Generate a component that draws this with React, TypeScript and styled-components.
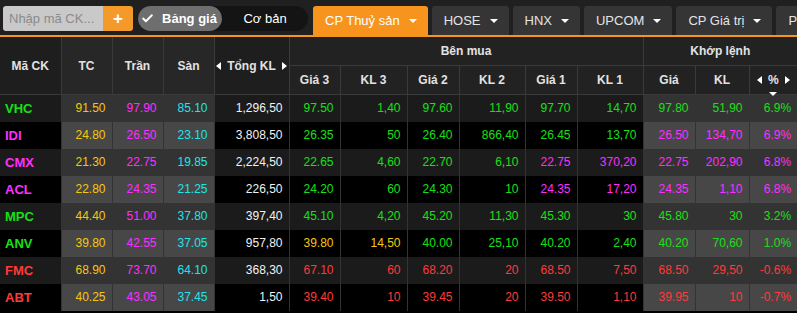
import React from 'react';
import styled, { createGlobalStyle } from 'styled-components';
import { Check } from 'lucide-react';

const ORANGE = '#f7941d';
const YELLOW = '#f5c80f';
const MAGENTA = '#ff2eff';
const CYAN = '#22e3ea';
const GREEN = '#17e017';
const RED = '#ff3a3a';

const GlobalStyle = createGlobalStyle`
  body {
    margin: 0;
    background: #000;
    font-family: "Liberation Sans", Arial, sans-serif;
  }
`;

const Page = styled.div`
  width: 797px;
  height: 313px;
  overflow: hidden;
  background: #000;
`;

const Toolbar = styled.div`
  display: flex;
  align-items: flex-start;
  height: 29px;
  padding: 6px 0 0 3px;
  background: #202020;
  border-bottom: 2px solid ${ORANGE};
  overflow: hidden;
  white-space: nowrap;
`;

const SearchBox = styled.div`
  display: flex;
  height: 25px;
  flex-shrink: 0;
`;

const SearchInput = styled.input`
  width: 100px;
  box-sizing: border-box;
  border: none;
  border-radius: 3px 0 0 3px;
  background: #c9c9c9;
  padding: 0 6px;
  font-family: inherit;
  font-size: 13px;
  color: #333;
  outline: none;

  &::placeholder {
    color: #8a8a8a;
  }
`;

const AddButton = styled.button`
  width: 30px;
  border: none;
  border-radius: 0 3px 3px 0;
  background: #f39a2b;
  color: #fff;
  font-size: 17px;
  font-weight: bold;
  padding: 0;
  line-height: 25px;
`;

const ViewSwitch = styled.div`
  display: flex;
  align-items: center;
  width: 170px;
  height: 25px;
  margin-left: 5px;
  border-radius: 13px;
  background: #141414;
  flex-shrink: 0;
`;

const SwitchOption = styled.div<{ $active?: boolean }>`
  display: flex;
  align-items: center;
  justify-content: center;
  gap: 8px;
  height: 25px;
  border-radius: 13px;
  font-size: 13px;
  color: #fff;
  font-weight: ${(p) => (p.$active ? 'bold' : 'normal')};
  background: ${(p) => (p.$active ? '#6e6e6e' : 'transparent')};
  width: ${(p) => (p.$active ? '84px' : '86px')};
  padding-right: ${(p) => (p.$active ? '2px' : '0')};
  box-sizing: border-box;
`;

const Tabs = styled.div`
  display: flex;
  gap: 4px;
  margin-left: 5px;
`;

const Tab = styled.div<{ $active?: boolean }>`
  display: flex;
  align-items: center;
  gap: 9px;
  height: 29px;
  padding: 0 11px 0 12px;
  border-radius: 3px 3px 0 0;
  background: ${(p) => (p.$active ? ORANGE : '#353535')};
  color: ${(p) => (p.$active ? '#fff' : '#e4e4e4')};
  font-size: 13px;
  flex-shrink: 0;
`;

const Caret = styled.span`
  width: 0;
  height: 0;
  border-left: 4px solid transparent;
  border-right: 4px solid transparent;
  border-top: 4px solid #fff;
`;

const Board = styled.table`
  width: 797px;
  table-layout: fixed;
  border-collapse: collapse;
  font-size: 12px;
`;

const Th = styled.th<{ $tone?: 'dark' | 'price' }>`
  height: 28px;
  padding: 0;
  font-weight: bold;
  color: #e2e2e2;
  text-align: center;
  background: ${(p) =>
    p.$tone === 'dark' ? '#1e1e1e' : p.$tone === 'price' ? '#272727' : '#222'};
  border: 1px solid #3a3a3a;
  border-top: none;
  border-bottom-color: #3a3a3a;
  white-space: nowrap;
`;

const SortLabel = styled.span`
  display: inline-flex;
  align-items: center;
  gap: 6px;
  position: relative;
`;

const DownMark = styled.span`
  position: absolute;
  left: 50%;
  bottom: -9px;
  margin-left: -4px;
  border-left: 4px solid transparent;
  border-right: 4px solid transparent;
  border-top: 4px solid #fff;
`;

const Row = styled.tr<{ $odd: boolean }>`
  height: 27px;
  background: ${(p) => (p.$odd ? '#1b1b1b' : '#000')};
`;

const Td = styled.td<{ $color: string; $shade?: boolean; $odd: boolean; $left?: boolean; $bold?: boolean }>`
  padding: ${(p) => (p.$left ? '0 0 0 5px' : '0 6px 0 0')};
  text-align: ${(p) => (p.$left ? 'left' : 'right')};
  color: ${(p) => p.$color};
  font-size: ${(p) => (p.$bold ? '13px' : '12px')};
  font-weight: ${(p) => (p.$bold ? 'bold' : 'normal')};
  background: ${(p) => (p.$shade ? (p.$odd ? '#333' : '#474747') : 'transparent')};
  border-right: 1px solid #333;
  white-space: nowrap;
`;

const Arrow = ({ dir }: { dir: 'l' | 'r' }) => (
  <svg width="5" height="8" viewBox="0 0 5 8">
    <path d={dir === 'l' ? 'M5 0 L0 4 L5 8 Z' : 'M0 0 L5 4 L0 8 Z'} fill="#fff" />
  </svg>
);

type Stock = {
  sym: string;
  ref: string;
  ceil: string;
  floor: string;
  total: string;
  bids: [string, string][];
  match: string;
  vol: string;
  pct: string;
};

const stocks: Stock[] = [
  { sym: 'VHC', ref: '91.50', ceil: '97.90', floor: '85.10', total: '1,296,50', bids: [['97.50', '1,40'], ['97.60', '11,90'], ['97.70', '14,70']], match: '97.80', vol: '51,90', pct: '6.9%' },
  { sym: 'IDI', ref: '24.80', ceil: '26.50', floor: '23.10', total: '3,808,50', bids: [['26.35', '50'], ['26.40', '866,40'], ['26.45', '13,70']], match: '26.50', vol: '134,70', pct: '6.9%' },
  { sym: 'CMX', ref: '21.30', ceil: '22.75', floor: '19.85', total: '2,224,50', bids: [['22.65', '4,60'], ['22.70', '6,10'], ['22.75', '370,20']], match: '22.75', vol: '202,90', pct: '6.8%' },
  { sym: 'ACL', ref: '22.80', ceil: '24.35', floor: '21.25', total: '226,50', bids: [['24.20', '60'], ['24.30', '10'], ['24.35', '17,20']], match: '24.35', vol: '1,10', pct: '6.8%' },
  { sym: 'MPC', ref: '44.40', ceil: '51.00', floor: '37.80', total: '397,40', bids: [['45.10', '4,20'], ['45.20', '11,30'], ['45.30', '30']], match: '45.80', vol: '30', pct: '3.2%' },
  { sym: 'ANV', ref: '39.80', ceil: '42.55', floor: '37.05', total: '957,80', bids: [['39.80', '14,50'], ['40.00', '25,10'], ['40.20', '2,40']], match: '40.20', vol: '70,60', pct: '1.0%' },
  { sym: 'FMC', ref: '68.90', ceil: '73.70', floor: '64.10', total: '368,30', bids: [['67.10', '60'], ['68.20', '20'], ['68.50', '7,50']], match: '68.50', vol: '29,50', pct: '-0.6%' },
  { sym: 'ABT', ref: '40.25', ceil: '43.05', floor: '37.45', total: '1,50', bids: [['39.40', '10'], ['39.45', '20'], ['39.50', '1,10']], match: '39.95', vol: '10', pct: '-0.7%' },
];

const priceColor = (price: string, s: Stock) => {
  const p = parseFloat(price);
  if (p === parseFloat(s.ceil)) return MAGENTA;
  if (p === parseFloat(s.floor)) return CYAN;
  if (p === parseFloat(s.ref)) return YELLOW;
  return p > parseFloat(s.ref) ? GREEN : RED;
};

const colWidths = [61, 51, 51, 51, 75, 51, 67, 52, 66, 52, 66, 52, 54, 48];
const tabs = ['CP Thuỷ sản', 'HOSE', 'HNX', 'UPCOM', 'CP Giá trị', 'Phái sinh'];

const App = () => (
  <Page>
    <GlobalStyle />
    <Toolbar>
      <SearchBox>
        <SearchInput placeholder="Nhập mã CK..." />
        <AddButton>+</AddButton>
      </SearchBox>
      <ViewSwitch>
        <SwitchOption $active>
          <Check size={13} strokeWidth={3.5} color="#fff" />
          Bảng giá
        </SwitchOption>
        <SwitchOption>Cơ bản</SwitchOption>
      </ViewSwitch>
      <Tabs>
        {tabs.map((t, i) => (
          <Tab key={t} $active={i === 0}>
            {t}
            <Caret />
          </Tab>
        ))}
      </Tabs>
    </Toolbar>

    <Board>
      <colgroup>
        {colWidths.map((w, i) => (
          <col key={i} style={{ width: w }} />
        ))}
      </colgroup>
      <thead>
        <tr>
          <Th rowSpan={2} $tone="dark" style={{ borderLeft: 'none' }}>Mã CK</Th>
          <Th rowSpan={2} $tone="price">TC</Th>
          <Th rowSpan={2} $tone="price">Trần</Th>
          <Th rowSpan={2} $tone="price">Sàn</Th>
          <Th rowSpan={2} $tone="dark">
            <SortLabel>
              <Arrow dir="l" />
              Tổng KL
              <Arrow dir="r" />
            </SortLabel>
          </Th>
          <Th colSpan={6}>Bên mua</Th>
          <Th colSpan={3} style={{ borderRight: 'none' }}>Khớp lệnh</Th>
        </tr>
        <tr>
          {['Giá 3', 'KL 3', 'Giá 2', 'KL 2', 'Giá 1', 'KL 1', 'Giá', 'KL'].map((h) => (
            <Th key={h}>{h}</Th>
          ))}
          <Th style={{ borderRight: 'none' }}>
            <SortLabel>
              <Arrow dir="l" />
              %
              <Arrow dir="r" />
              <DownMark />
            </SortLabel>
          </Th>
        </tr>
      </thead>
      <tbody>
        {stocks.map((s, i) => {
          const odd = i % 2 === 0;
          const mc = priceColor(s.match, s);
          return (
            <Row key={s.sym} $odd={odd}>
              <Td $odd={odd} $left $bold $color={mc}>{s.sym}</Td>
              <Td $odd={odd} $shade $color={YELLOW}>{s.ref}</Td>
              <Td $odd={odd} $shade $color={MAGENTA}>{s.ceil}</Td>
              <Td $odd={odd} $shade $color={CYAN}>{s.floor}</Td>
              <Td $odd={odd} $color="#f2f2f2">{s.total}</Td>
              {s.bids.map(([p, v], j) => {
                const c = priceColor(p, s);
                return (
                  <React.Fragment key={j}>
                    <Td $odd={odd} $color={c}>{p}</Td>
                    <Td $odd={odd} $color={c}>{v}</Td>
                  </React.Fragment>
                );
              })}
              <Td $odd={odd} $shade $color={mc}>{s.match}</Td>
              <Td $odd={odd} $shade $color={mc}>{s.vol}</Td>
              <Td $odd={odd} $shade $color={mc} style={{ borderRight: 'none' }}>{s.pct}</Td>
            </Row>
          );
        })}
      </tbody>
    </Board>
  </Page>
);

export default App;
